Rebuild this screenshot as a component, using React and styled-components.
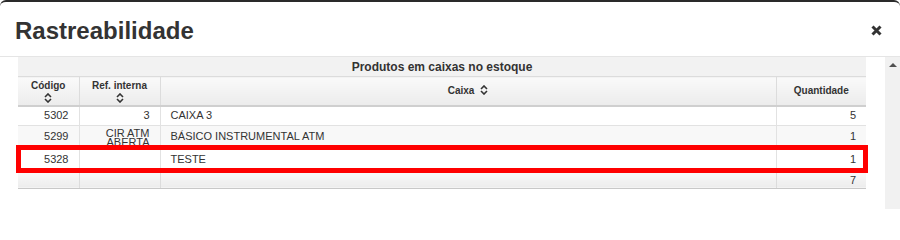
import React from 'react';
import styled, { createGlobalStyle } from 'styled-components';

const GlobalStyle = createGlobalStyle`
  html, body {
    margin: 0;
    background: #fff;
    font-family: 'Liberation Sans', Arial, sans-serif;
    color: #333;
  }
`;

const rows = [
  { code: '5302', ref: '3', box: 'CAIXA 3', qty: 5, height: 19 },
  { code: '5299', ref: 'CIR ATM ABERTA', box: 'BÁSICO INSTRUMENTAL ATM', qty: 1, height: 22 },
  { code: '5328', ref: '', box: 'TESTE', qty: 1, height: 24, marked: true },
];

const SortIcon = ({ block }) => (
  <SortSvg $block={block} width="8" height="10" viewBox="0 0 8 10">
    <path d="M1 4 L4 1 L7 4" fill="none" stroke="#333" strokeWidth="1.6" />
    <path d="M1 6 L4 9 L7 6" fill="none" stroke="#333" strokeWidth="1.6" />
  </SortSvg>
);

const App = () => {
  const total = rows.reduce((sum, r) => sum + r.qty, 0);

  return (
    <>
      <GlobalStyle />
      <Modal>
        <Header>
          <Title>Rastreabilidade</Title>
          <CloseButton aria-label="Fechar">
            <svg width="11" height="11" viewBox="0 0 11 11">
              <path d="M1.5 1.5 L9.5 9.5 M9.5 1.5 L1.5 9.5" stroke="#333" strokeWidth="3" />
            </svg>
          </CloseButton>
        </Header>
        <Body>
          <TableArea>
            <Table>
              <colgroup>
                <col style={{ width: 61 }} />
                <col style={{ width: 81 }} />
                <col style={{ width: 616 }} />
                <col style={{ width: 90 }} />
              </colgroup>
              <thead>
                <tr>
                  <CaptionCell colSpan={4}>Produtos em caixas no estoque</CaptionCell>
                </tr>
                <tr>
                  <HeadCell>
                    Código
                    <SortIcon block />
                  </HeadCell>
                  <HeadCell>
                    Ref. interna
                    <SortIcon block />
                  </HeadCell>
                  <HeadCell>
                    Caixa
                    <SortIcon />
                  </HeadCell>
                  <HeadCell>Quantidade</HeadCell>
                </tr>
              </thead>
              <tbody>
                {rows.map((r, i) => (
                  <Row key={r.code} $odd={i % 2 === 1} $marked={r.marked}>
                    <Cell $h={r.height} $align="right">{r.code}</Cell>
                    <Cell $h={r.height} $align="right" $tight={r.ref.length > 8}>
                      {r.ref}
                    </Cell>
                    <Cell $h={r.height}>{r.box}</Cell>
                    <Cell $h={r.height} $align="right">{r.qty}</Cell>
                  </Row>
                ))}
              </tbody>
              <tfoot>
                <tr>
                  <FootCell />
                  <FootCell />
                  <FootCell />
                  <FootCell>{total}</FootCell>
                </tr>
              </tfoot>
            </Table>
          </TableArea>
          <Scrollbar>
            <ScrollArrow />
          </Scrollbar>
        </Body>
      </Modal>
    </>
  );
};

export default App;

const Modal = styled.div`
  width: 900px;
  height: 209px;
  box-sizing: border-box;
  border-top: 2px solid #2a2a2a;
  border-radius: 6px 6px 0 0;
  overflow: hidden;
  display: flex;
  flex-direction: column;
`;

const Header = styled.div`
  height: 54px;
  flex-shrink: 0;
  display: flex;
  align-items: center;
  justify-content: space-between;
  padding: 0 18px 0 15px;
  border-bottom: 1px solid #e5e5e5;
`;

const Title = styled.h3`
  margin: 4px 0 0;
  font-size: 24px;
  font-weight: 700;
  color: #333;
`;

const CloseButton = styled.button`
  border: none;
  background: none;
  padding: 0;
  margin-top: 3px;
  display: flex;
  cursor: pointer;
`;

const Body = styled.div`
  flex: 1;
  display: flex;
  min-height: 0;
`;

const TableArea = styled.div`
  flex: 1;
  padding-left: 18px;
`;

const Table = styled.table`
  width: 848px;
  border-collapse: collapse;
  table-layout: fixed;
  font-size: 11px;
  color: #333;
`;

const CaptionCell = styled.th`
  height: 19px;
  padding: 0;
  background: #f2f2f2;
  border-bottom: 1px solid #dcdcdc;
  font-size: 12px;
  font-weight: 700;
  text-align: center;
  color: #333;
`;

const headBg = `
  background: linear-gradient(to bottom, #fafafa 0%, #ececec 100%);
`;

const HeadCell = styled.th`
  height: 28px;
  padding: 0 4px;
  ${headBg}
  border-left: 1px solid #dcdcdc;
  border-bottom: 2px solid #cfcfcf;
  font-size: 10px;
  font-weight: 700;
  text-align: center;
  line-height: 12px;
  &:first-child {
    border-left: none;
  }
`;

const SortSvg = styled.svg`
  display: ${(p) => (p.$block ? 'block' : 'inline-block')};
  margin: ${(p) => (p.$block ? '1px auto 0' : '0 0 -1px 6px')};
`;

const Row = styled.tr`
  background: ${(p) => (p.$odd ? '#f8f8f8' : '#fff')};
  ${(p) =>
    p.$marked &&
    `
    outline: 5px solid #ff0000;
    outline-offset: -3px;
  `}
`;

const Cell = styled.td`
  height: ${(p) => p.$h}px;
  box-sizing: border-box;
  padding: ${(p) => (p.$tight ? '3px 10px 0' : '0 10px')};
  border-bottom: 1px solid #e2e2e2;
  border-left: 1px solid #e2e2e2;
  text-align: ${(p) => p.$align || 'left'};
  line-height: ${(p) => (p.$tight ? '9px' : '13px')};
  font-size: 11px;
  vertical-align: middle;
  &:first-child {
    border-left: none;
  }
`;

const FootCell = styled.td`
  height: 17px;
  box-sizing: border-box;
  padding: 0 10px;
  ${headBg}
  border-left: 1px solid #dcdcdc;
  border-bottom: 1px solid #c8c8c8;
  text-align: right;
  font-size: 11px;
  &:first-child {
    border-left: none;
  }
`;

const Scrollbar = styled.div`
  width: 15px;
  flex-shrink: 0;
  background: #f1f1f1;
  display: flex;
  justify-content: center;
  padding-top: 6px;
  box-sizing: border-box;
`;

const ScrollArrow = styled.div`
  width: 0;
  height: 0;
  border-left: 4px solid transparent;
  border-right: 4px solid transparent;
  border-bottom: 4px solid #505050;
`;
